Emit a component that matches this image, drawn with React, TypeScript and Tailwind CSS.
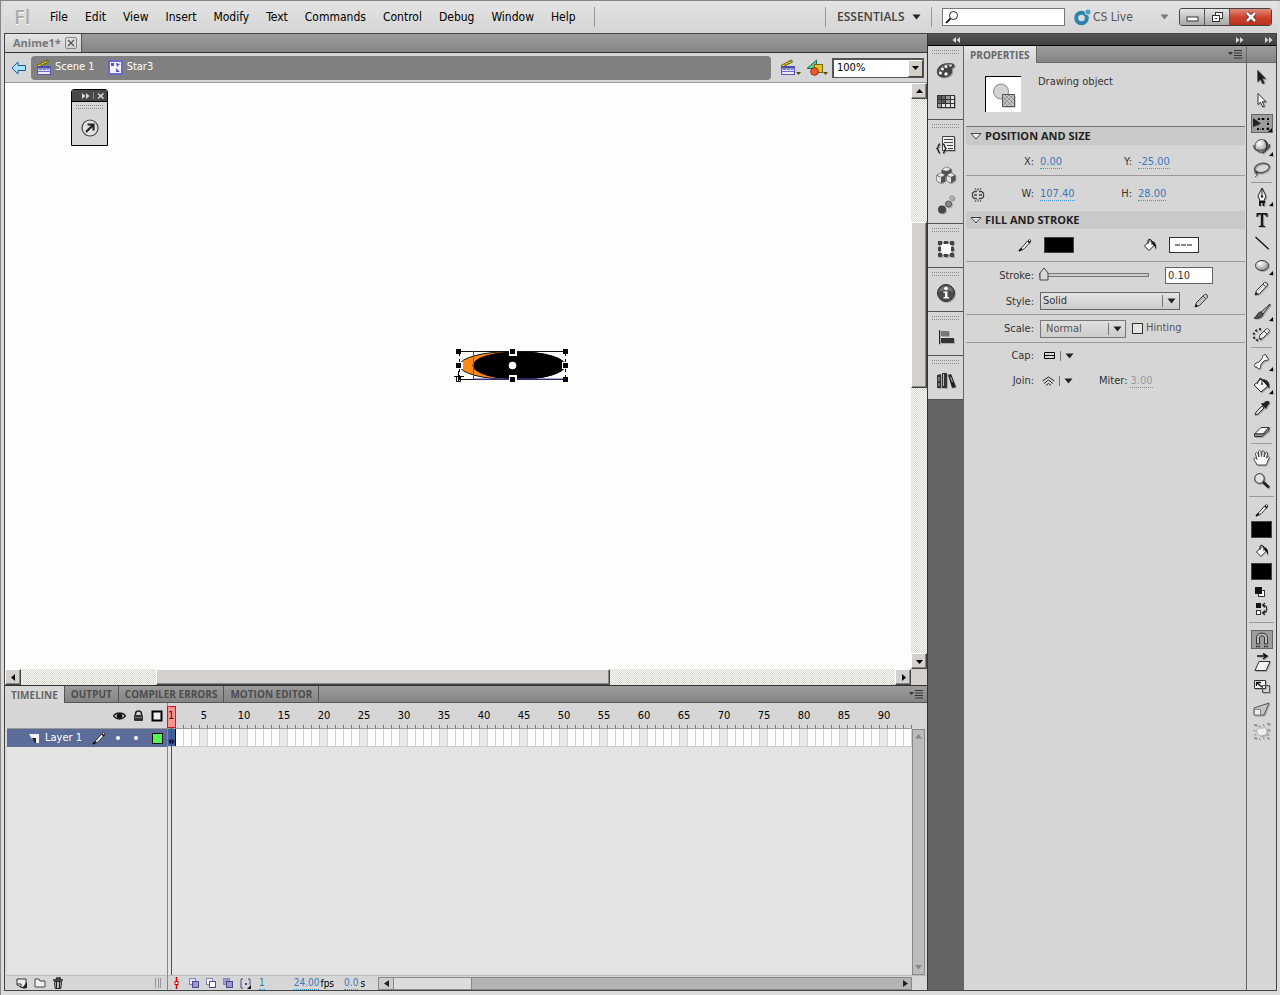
import { useState } from "react";
import type { ReactNode } from "react";

interface Tool {
  label: string;
  icon: ReactNode;
  more?: boolean;
}

const Icon = ({ children, w = 20, h = 20 }: { children: ReactNode; w?: number; h?: number }) => (
  <svg width={w} height={h} viewBox={`0 0 ${w} ${h}`} fill="none" className="shrink-0" aria-hidden="true">
    {children}
  </svg>
);

const Down = ({ color = "#222" }: { color?: string }) => (
  <Icon w={9} h={6}>
    <path d="M0.5 0.5h8L4.5 5.5z" fill={color} />
  </Icon>
);

const Chevrons = ({ left = false }: { left?: boolean }) => (
  <Icon w={8} h={6}>
    <path d={left ? "M4 0v6L0.5 3zM8 0v6L4.5 3z" : "M0 0v6L3.5 3zM4 0v6L7.5 3z"} fill="#d8d8d8" />
  </Icon>
);

const PanelMenu = () => (
  <button aria-label="Panel menu" className="flex items-center">
    <Icon w={14} h={9}>
      <path d="M0 2h5L2.500 5z" fill="#333" />
      <path d="M6 0.500h8M6 3h8M6 5.500h8M6 8h8" stroke="#333" />
    </Icon>
  </button>
);

const Clapper = () => (
  <Icon w={16} h={17}>
    <path d="M1 6.500L11.500 1l1 2L2.500 8z" fill="#f0e020" stroke="#6b6410" />
    <path d="M4.500 4.500l1 2M7.500 3l1 2M10 1.500l1 2" stroke="#6b6410" />
    <rect x="1.500" y="7.500" width="13" height="8" fill="#d8d8f8" stroke="#5a58b8" />
    <path d="M2 8.500h12" stroke="#4b49a0" strokeWidth="2" />
    <path d="M3 10.500h10" stroke="#7a78c8" strokeDasharray="3 1" />
    <path d="M2 12.500h12" stroke="#6f6cc8" />
    <path d="M3 14h10" stroke="#fff" />
  </Icon>
);

const Pencil = ({ fill = "#f4f4f4" }: { fill?: string }) => (
  <>
    <path d="M3 16l1.500-4.500L12.500 3.500c1.500-1 3.800 1 2.800 2.800L7.500 14.500z" fill={fill} stroke="#333" />
    <path d="M11 5l3 3" stroke="#555" />
    <path d="M6 12l6-6" stroke="#aaa" />
    <path d="M3 16l1-3 2 2z" fill="#111" />
  </>
);

const SmallPencil = () => (
  <Icon w={14} h={14}>
    <path d="M1 13l1.500-2.500L4.500 9l5-6 2-1.500 1.500 1.300-1.500 2.200-5 5.500-2.500 1.500z" fill="#f4f4f4" stroke="#333" />
    <path d="M1 13l3-2.500M10 3l2 2" stroke="#000" strokeWidth="1.500" />
  </Icon>
);

const SmallBucket = () => (
  <Icon w={14} h={14}>
    <path d="M1.500 8L7 2.500l4.500 4.500L6 12.500z" fill="#fff" stroke="#222" />
    <path d="M5 6V2l2-1 2 2v4" stroke="#222" />
    <path d="M8.500 3c3.500.5 5.500 3.500 4.500 9-.8-3-1.500-4-2.500-5z" fill="#111" />
  </Icon>
);

const tools1: Tool[] = [
  { label: "Selection", icon: <path d="M5.500 2v12l3-2.500 2 4.500 2-1-2-4.200h3.500z" fill="#1c1c1c" stroke="#555" strokeWidth=".5" /> },
  { label: "Subselection", icon: <path d="M6 2.500v11l2.500-2.300 2.300 4.800 1.600-.8-2-4.500H14z" fill="#fff" stroke="#333" /> },
  { label: "Free Transform", more: true, icon: <><path d="M1 4v9l8-3.500z" fill="#222" /><path d="M6 4h2v2H6zM10 4h2v2h-2zM15 4h2v2h-2zM15 9h2v2h-2zM15 14h2v2h-2zM10 14h2v2h-2zM5 14h2v2H5z" fill="#000" /><path d="M6 5h10v10H6z" stroke="#333" strokeDasharray="1 2" /></> },
  { label: "3D Rotation", more: true, icon: <><circle cx="9.500" cy="9" r="6.500" fill="url(#ball)" stroke="#555" /><path d="M2 8c-1 5 4 6 8 5.500S18 11 17.500 7" stroke="#444" strokeWidth="1.300" /><path d="M12.500 3c4 4 3 10-2 13" stroke="#333" strokeWidth="1.500" /><path d="M6 11c2 1.500 5 1.500 7 0v3c-2 2-5 2-7 0z" fill="#777" opacity=".5" /></> },
  { label: "Lasso", icon: <><ellipse cx="10" cy="8" rx="7.500" ry="4.500" stroke="#555" transform="rotate(-12 10 8)" strokeWidth="1.500" /><path d="M4 11c-2 0-2 2.500 0 2.500s2-2 0-2.500c2 3 1 5-1 6" stroke="#333" /></> },
];

const tools2: Tool[] = [
  { label: "Pen", more: true, icon: <><path d="M10 1L6 9l2 5h4l2-5z" fill="#f0f0f0" stroke="#222" /><path d="M10 2v7" stroke="#222" /><circle cx="10" cy="9.500" r="1.200" fill="#222" /><path d="M7 15h6M8 15v4M11.500 15v4" stroke="#111" strokeWidth="1.800" /></> },
  { label: "Text", icon: <path d="M4.500 3h11v4h-1q-.3-2.500-2.500-2.500h-.8V15q0 1 2 1v1H6.800v-1q2 0 2-1V4.500H8Q5.800 4.500 5.500 7h-1z" fill="#1a1a1a" /> },
  { label: "Line", icon: <path d="M3.500 4l13 12" stroke="#111" strokeWidth="1.200" /> },
  { label: "Oval", more: true, icon: <ellipse cx="10" cy="9.500" rx="6.500" ry="5" fill="url(#ball)" stroke="#333" /> },
  { label: "Pencil", icon: <Pencil /> },
  { label: "Brush", more: true, icon: <><path d="M18 2l-9 8 2 2 7-9z" fill="#bbb" stroke="#333" /><path d="M9 10c-4 0-3 4-7 6 5 1 9-1 9-4z" fill="#555" stroke="#222" /></> },
  { label: "Deco", icon: <><path d="M9 4c-9 1-8 8-6 10s5 1 6 0" stroke="#222" strokeWidth="2" strokeDasharray="2 2" /><path d="M7 14l1-4 6-6c2-1 4 1 3 3l-6 6z" fill="#eee" stroke="#444" /><path d="M12 6l3 3" stroke="#555" /></> },
];

const tools3: Tool[] = [
  { label: "Bone", more: true, icon: <path d="M3 12c-1.500 2 0 3.500 2 3 0 2 3 2.500 3.500.5.200-1-.5-2 .5-3l3-3.500c1-1 2 0 3-.5 2-1 1.500-3-.5-3.500.5-2-1-3-3-2-1.500 1-.5 2.500-1.500 3.500l-3 3.500c-1 1-2.500 0-4 2z" fill="#f8f8f8" stroke="#333" /> },
  { label: "Paint Bucket", more: true, icon: <><path d="M2 10l7-6 7 7-7 6z" fill="#f0f0f0" stroke="#222" /><path d="M5 9L8 3l2 1v5" stroke="#333" /><path d="M10 4c5 0 9 4 7 10-1-2-1-3-2-3z" fill="#222" /><circle cx="10" cy="9" r="1" fill="#444" /></> },
  { label: "Eyedropper", icon: <><path d="M3 17l1-3 6-6 2 2-6 6z" fill="#ddd" stroke="#333" /><path d="M9 6l5 5 1-2 1-2c2-1 2-4 0-4s-3 0-4 2l-2 0z" fill="#222" /></> },
  { label: "Eraser", icon: <><path d="M2.500 13L9 6.500h8L11 13z" fill="#f4f4f4" stroke="#333" /><path d="M2.500 13v2.500H10l7-6V6.500L11 13z" fill="#999" stroke="#333" /></> },
];

const tools4: Tool[] = [
  { label: "Hand", icon: <path d="M5 17C4 14 1.500 12 2 10.500s2.500 0 3 1L3.500 6c0-2 2-2 2.500 0l1 3-.500-5c0-2 2.200-2 2.500 0l.5 4.500L10 4c.3-2 2.300-1.500 2.300.5L12 9l1.500-4c.8-1.500 2.500-.8 2 1L14.500 10c2-2 3.500-1.500 2.500.500C15 14 15 15 14 17z" fill="#fff" stroke="#444" /> },
  { label: "Zoom", icon: <><circle cx="7.500" cy="7.500" r="4.800" fill="#e4e4e4" stroke="#555" strokeWidth="1.300" /><path d="M11 11l6 5.500" stroke="#222" strokeWidth="3" /></> },
];

const tools5: Tool[] = [
  { label: "Snap to Objects", icon: <><path d="M4.500 14V8c0-6.500 11-6.500 11 0v6h-3V8c0-3-5-3-5 0v6z" fill="#bbb" stroke="#333" /><path d="M4 16.500h4M12 16.500h4" stroke="#222" strokeWidth="1.500" strokeDasharray="1.500 1" /></> },
  { label: "Rotate and Skew", icon: <><path d="M5 3h9M11 0.500L15 3l-4 3" stroke="#111" strokeWidth="1.500" /><path d="M3 17.500l4-9h11l-4 9z" fill="#f4f4f4" stroke="#333" /></> },
  { label: "Scale", icon: <><path d="M2.500 4.500h11v8h-11z" fill="#f4f4f4" stroke="#333" /><path d="M10.500 9.500h7v7h-7z" stroke="#555" /><path d="M5 7l5 4M4.500 10V6.500H9" stroke="#111" strokeWidth="1.300" /></> },
  { label: "Distort", icon: <><path d="M2 9l15-5-5 12H2z" fill="#c4c4c4" stroke="#555" /><path d="M2.500 10.500h6v5.500h-6z" fill="#eee" stroke="#888" /></> },
  { label: "Envelope", icon: <><path d="M2 3h3M7 4h1M11 3h1M15 2h3M2 8v1M3 12v1M2 16h3M7 17h1M11 16h1M15 16h2M17 7v2M16 12v1" stroke="#888" strokeWidth="1.500" /><path d="M5 8c1-4 4-1 6-2s4 0 4 3 0 4-2 4-4 2-6 0-3-3-2-5z" fill="#eee" stroke="#aaa" /></> },
];

const dockGroups: Tool[][] = [
  [
    { label: "Color", icon: <><path d="M1 12C0 6 6 2 13 2c6 0 7 3 4 5-2 1 0 3-1 5-3 6-14 6-15 0z" fill="#444" /><path d="M3 12c0-5 4-8 11-9" stroke="#888" /><circle cx="4.500" cy="12" r="1.500" fill="#fff" /><circle cx="6.500" cy="8" r="1.500" fill="#fff" /><circle cx="10" cy="5.500" r="1.500" fill="#fff" /><circle cx="14.500" cy="4.500" r="1.300" fill="#ddd" /><circle cx="10" cy="13" r="1.700" fill="#fff" /></> },
    { label: "Swatches", icon: <><path d="M1 4h18v13H1z" fill="#333" /><path d="M2 5h3v3H2zM6 9h3v3H6z" fill="#555" /><path d="M6 5h3v3H6zM2 9h3v3H2z" fill="#666" /><path d="M10 5h4v3h-4zM10 9h4v3h-4zM2 13h3v3H2z" fill="#999" /><path d="M15 5h3v3h-3zM15 9h3v3h-3zM6 13h3v3H6zM10 13h4v3h-4zM15 13h3v3h-3z" fill="#e4e4e4" /></> },
  ],
  [
    { label: "Code Snippets", icon: <><path d="M6.500 1.500h12v14h-12z" fill="#eee" stroke="#444" /><path d="M8 4.500h9M8 7.500h9M11 10.500h6M12 13.500h5" stroke="#444" /><path d="M4 9c-2 0-1 3-3 4.500C3 15 2 18 4 18M7 9c2 0 1 3 3 4.500C8 15 9 18 7 18" stroke="#222" strokeWidth="1.500" /></> },
    { label: "Components", icon: <><path d="M6 5l4-3 5 2v5l-5 2-4-2zM1 10l4-2 4 2v6l-4 2-4-2zM11 10l4-2 4 2v5l-4 3-4-2z" fill="#555" stroke="#444" /><path d="M6 5l4-3 5 2-4 2zM1 10l4-2 4 2-4 2zM11 10l4-2 4 2-4 2zM1 11l4 1.500V18l-4-2zM11 11l4 1.500V18l-4-2z" fill="#e4e4e4" /></> },
    { label: "Motion Presets", icon: <><circle cx="6" cy="14.500" r="4" fill="#444" /><circle cx="12.500" cy="9" r="3" fill="#888" stroke="#555" /><circle cx="16" cy="3" r="2.200" fill="#bbb" stroke="#888" /></> },
  ],
  [{ label: "Transform", icon: <><path d="M4 4h12v12H4z" fill="#fcfcfc" stroke="#666" /><path d="M2 2h4v4H2zM8 2h4v3H8zM14 2h4v4h-4zM2 8h3v4H2zM15 8h3v4h-3zM2 14h4v4H2zM8 15h4v3H8zM14 14h4v4h-4z" fill="#444" /></> }],
  [{ label: "Info", icon: <><circle cx="10" cy="10" r="8.500" fill="#4b4b4b" stroke="#333" /><path d="M3 9c1-8 13-8 14 0-4-2-10-2-14 0z" fill="#999" opacity=".5" /><circle cx="10" cy="5.500" r="1.800" fill="#fff" /><path d="M7.500 8.500h4V14h1.500v1.500H7.500V14H9v-4H7.500z" fill="#fff" /></> }],
  [{ label: "Align", icon: <><path d="M3.500 3v14" stroke="#222" /><path d="M5 4h8v5H5z" fill="#777" /><path d="M5 11h13v5H5z" fill="#333" /></> }],
  [{ label: "Library", icon: <><path d="M1 4l4-1v14H1zM6 2h5v15H6z" fill="#333" /><path d="M12 4l3-1 5 13-4 1z" fill="#222" /><path d="M3 6v4M3 12v3M7.500 3v12M14.500 6l2 5" stroke="#bbb" /></> }],
];

const ToolButton = ({ tool, selected = false }: { tool: Tool; selected?: boolean }) => (
  <button aria-label={tool.label} className="flex h-[23px] w-full items-center justify-center">
    <span
      className={`relative flex h-[19px] w-[22px] items-center justify-center ${
        selected ? "bg-[#9d9d9d] border border-[#666]" : "drop-shadow-[1px_1px_0_rgba(0,0,0,0.2)]"
      }`}
    >
      <Icon>{tool.icon}</Icon>
      {tool.more && (
        <svg width="4" height="4" viewBox="0 0 4 4" className="absolute right-0 bottom-0">
          <path d="M4 0v4H0z" fill="#000" />
        </svg>
      )}
    </span>
  </button>
);

const dots = "bg-[linear-gradient(90deg,#888_1px,transparent_1px)] bg-[length:2px_1px]";

const Grip = () => (
  <div className="mx-auto flex h-[4px] w-[28px] flex-col justify-between">
    <span className={`h-px ${dots}`} />
    <span className={`h-px ${dots}`} />
  </div>
);

const ScrollArrow = ({ dir }: { dir: "up" | "down" | "left" | "right" }) => {
  const shapes = { up: "M1 6h7L4.500 2z", down: "M1 3h7L4.500 7z", left: "M6 1v7L2 4.500z", right: "M3 1v7l4-3.500z" };
  return (
    <button
      aria-label={`Scroll ${dir}`}
      className="flex size-4 shrink-0 items-center justify-center border border-t-white border-l-white border-r-[#444] border-b-[#444] bg-[#d4d0cd] shadow-[inset_-1px_-1px_#888]"
    >
      <Icon w={9} h={9}><path d={shapes[dir]} fill="#000" /></Icon>
    </button>
  );
};

const track = "bg-[conic-gradient(#d6d6cf_25%,#fcfcf8_0_50%,#d6d6cf_0_75%,#fcfcf8_0)] bg-[length:2px_2px]";
const thumb = "border border-t-white border-l-white border-r-[#444] border-b-[#444] bg-[#d4d0cd] shadow-[inset_-1px_-1px_#888]";
const tabBar = "bg-linear-to-b from-[#9c9c9c] to-[#858585]";
const hot = "leading-[12px] text-[#3a78b8] border-b border-dotted border-[#3a9ad8]";

const menus = ["File", "Edit", "View", "Insert", "Modify", "Text", "Commands", "Control", "Debug", "Window", "Help"];

const MenuBar = () => (
  <header className="flex h-[32px] shrink-0 items-center bg-linear-to-b from-[#e4e4e4] to-[#d4d4d4] pr-[5px] pl-[10px] text-[12px] text-black">
    <span className="w-[30px] text-[20px] leading-none font-semibold text-[#aaa] font-['Open_Sans'] [text-shadow:0_1px_#fff]">Fl</span>
    <nav className="flex gap-[17px] pl-[6px]">
      {menus.map((m) => (
        <button key={m}>{m}</button>
      ))}
    </nav>
    <div className="ml-[18px] h-5 w-px bg-[#999]" />
    <div className="ml-auto h-5 w-px bg-[#999]" />
    <button className="flex w-[105px] items-center gap-2 pl-[11px] font-['Open_Sans'] text-[12px] font-semibold text-[#444]">
      ESSENTIALS <Down />
    </button>
    <div className="mr-[10px] h-5 w-px bg-[#999]" />
    <label className="flex h-[18px] w-[123px] items-center border border-[#777] bg-white px-[2px]">
      <Icon w={14} h={14}>
        <circle cx="8.500" cy="5.500" r="4" stroke="#222" />
        <path d="M5.500 8.500L1 13" stroke="#222" strokeWidth="1.800" />
      </Icon>
      <input aria-label="Search" className="w-full min-w-0 bg-transparent outline-none" />
    </label>
    <button className="ml-[9px] flex w-[95px] items-center gap-[2px] text-[#555]">
      <Icon w={17} h={18}>
        <circle cx="7.500" cy="10" r="5.300" stroke="#2b84ad" strokeWidth="4" />
        <circle cx="14" cy="4" r="3" fill="#4aa0c4" stroke="#d8d8d8" />
      </Icon>
      <span className="mr-auto">CS Live</span>
      <Down color="#777" />
    </button>
    <div className="ml-[10px] flex h-[18px] w-[93px] overflow-hidden rounded-[3px] border border-[#444]">
      <button aria-label="Minimize" className="flex w-[25px] items-center justify-center border-r border-[#555] bg-linear-to-b from-[#e4e4e4] to-[#a8a8a8]">
        <Icon w={13} h={12}><rect x="1" y="6" width="11" height="4" fill="#fff" stroke="#333" /></Icon>
      </button>
      <button aria-label="Restore" className="flex w-[25px] items-center justify-center border-r border-[#555] bg-linear-to-b from-[#e4e4e4] to-[#a8a8a8]">
        <Icon w={13} h={12}>
          <rect x="4.500" y="1.500" width="7" height="6" fill="#fff" stroke="#333" />
          <rect x="1.500" y="4.500" width="7" height="6" fill="#fff" stroke="#333" />
          <rect x="4" y="7" width="2" height="1" fill="#333" />
        </Icon>
      </button>
      <button aria-label="Close" className="flex flex-1 items-center justify-center bg-linear-to-b from-[#e08a7c] via-[#cc4430] to-[#b8321e]">
        <Icon w={14} h={12}>
          <path d="M3 2l8 8M11 2l-8 8" stroke="#622" strokeWidth="4.500" />
          <path d="M3 2l8 8M11 2l-8 8" stroke="#fff" strokeWidth="2.500" />
        </Icon>
      </button>
    </div>
  </header>
);

const SceneBar = () => (
  <div className="flex h-[30px] shrink-0 items-center border-b border-[#999] bg-[#d6d6d6] pl-[6px]">
    <button aria-label="Back">
      <Icon w={16} h={14}>
        <path d="M1 7l6-6v3.500h7.500v5H7V13z" fill="#a9e2fb" stroke="#225a8a" />
      </Icon>
    </button>
    <div className="ml-[4px] flex h-[24px] flex-1 items-center rounded-[4px] bg-[#808080] pl-[5px] text-[11px] text-white">
      <button className="flex items-center gap-[3px]">
        <Clapper /> Scene 1
      </button>
      <button className="ml-[13px] flex items-center gap-[4px]">
        <Icon w={15} h={15}>
          <rect x="1" y="1" width="13" height="13" fill="#f4f4ff" stroke="#6a68c8" strokeWidth="2" />
          <path d="M3 3h3v3H3zM8 3l4 1-3 3zM8 8l4 4H8zM4 9l2-1" fill="#5a58b8" />
        </Icon>
        Star3
      </button>
    </div>
    <button aria-label="Edit scene" className="ml-[9px] flex items-end">
      <Clapper />
      <Icon w={5} h={4}><path d="M0 0h5L2.500 3z" fill="#554d00" /></Icon>
    </button>
    <button aria-label="Edit symbols" className="ml-[5px] flex items-end">
      <Icon w={17} h={17}>
        <path d="M1 9.500L10.500 1v8.500z" fill="#4dcc9c" stroke="#1c7450" />
        <rect x="8.500" y="5.500" width="8" height="8" fill="#e6c61c" stroke="#77660a" />
        <circle cx="8.500" cy="12.500" r="3.800" fill="#f05a30" stroke="#902808" />
      </Icon>
      <Icon w={5} h={4}><path d="M0 0h5L2.500 3z" fill="#554d00" /></Icon>
    </button>
    <div className="relative mr-[3px] ml-[4px] h-[20px] w-[92px] border border-t-2 border-l-2 border-[#555] bg-white">
      <select aria-label="Zoom" className="block h-full w-full appearance-none pl-[3px] text-[11px] text-black outline-none">
        <option>100%</option>
      </select>
      <span className="pointer-events-none absolute top-0 right-0 bottom-0 flex w-[15px] items-center justify-center border border-t-white border-l-white border-r-[#444] border-b-[#444] bg-[#d4d0c8]">
        <Icon w={9} h={6}><path d="M1 1h7L4.500 5z" fill="#000" /></Icon>
      </span>
    </div>
  </div>
);

const Stage = () => (
  <div className="flex min-h-0 flex-1 flex-col">
    <div className="flex min-h-0 flex-1">
      <main className="relative min-w-0 flex-1 overflow-hidden bg-[#fdfffd]">
        {/* Floating collapsed panel */}
        <div className="absolute top-[6px] left-[66px] w-[37px] overflow-hidden rounded-t-[3px] border border-black bg-[#d6d6d6]">
          <div className="flex h-[12px] items-center justify-end gap-[3px] border-b border-black bg-[#484848] pr-[2px]">
            <Chevrons />
            <span className="h-[7px] w-px bg-[#888]" />
            <Icon w={8} h={8}><path d="M1 1.500l5.500 5M6.500 1.500L1 6.500" stroke="#ddd" strokeWidth="1.500" /></Icon>
          </div>
          <div className="flex h-[43px] flex-col pt-[3px]">
            <Grip />
            <button aria-label="Open panel" className="flex flex-1 items-center justify-center pt-[1px]">
              <Icon>
                <circle cx="10" cy="10" r="8" fill="#e2e2e2" stroke="#444" strokeWidth="1.200" />
                <path d="M6 14l7-7M7.500 6.500H13.500V12.500" stroke="#222" strokeWidth="2.200" />
              </Icon>
            </button>
          </div>
        </div>
        {/* Selected drawing object */}
        <svg width="120" height="40" viewBox="0 0 120 40" fill="none" className="absolute top-[262px] left-[447px]">
          <ellipse cx="60.500" cy="20.500" rx="53" ry="14" fill="#ff8a18" stroke="#111" />
          <ellipse cx="67" cy="20.500" rx="46.500" ry="14" fill="#000" />
          <path d="M7 6.500h107M7 34.500h107" stroke="#111" />
          <path d="M21.500 6v28h90" stroke="#5048c0" />
          <path d="M7.500 6v28M113.500 6v28" stroke="#000" strokeDasharray="5 3" />
          <path d="M57 3h8v8h-8zM57 30h8v8h-8zM3 17h8v7H3zM110 17h8v7h-8z" fill="#fff" />
          <path d="M4 4h5v5H4zM58 4h5v5h-5zM111 4h5v5h-5zM4 18h5v5H4zM111 18h5v5h-5zM58 32h5v5h-5zM111 32h5v5h-5z" fill="#000" />
          <path d="M4.500 32v4.500h4V32" stroke="#000" />
          <circle cx="60.500" cy="20.500" r="3.800" fill="#fff" />
          <path d="M2 31.500h10M6.500 26v10" stroke="#000" />
        </svg>
      </main>
      <div className={`flex w-4 shrink-0 flex-col ${track}`}>
        <ScrollArrow dir="up" />
        <div className="flex min-h-0 flex-1 flex-col pt-[123px]">
          <div className={`h-[166px] ${thumb}`} />
        </div>
        <ScrollArrow dir="down" />
      </div>
    </div>
    <div className="flex h-4 shrink-0">
      <div className={`flex flex-1 ${track}`}>
        <ScrollArrow dir="left" />
        <div className="flex min-w-0 flex-1 pl-[135px]">
          <div className={`w-[454px] ${thumb}`} />
        </div>
        <ScrollArrow dir="right" />
      </div>
      <div className="w-4 bg-[#d4d0cd]" />
    </div>
  </div>
);

const frames = Array.from({ length: 160 }, (_, i) => i + 1);

const Onion = ({ a, b }: { a: string; b: string }) => (
  <Icon w={11} h={11}>
    <rect x="0.500" y="0.500" width="6" height="6" fill={a} stroke="#8884c4" />
    <rect x="3.500" y="3.500" width="6" height="6" fill={b} stroke="#4b4890" />
  </Icon>
);

const Timeline = () => (
  <section className="flex h-[305px] shrink-0 flex-col border-t border-[#333] bg-[#d6d6d6]">
    <div className={`flex h-[17px] shrink-0 items-stretch border-b border-[#555] font-['Open_Sans'] text-[10px] font-bold text-[#4c4c4c] ${tabBar}`}>
      {["TIMELINE", "OUTPUT", "COMPILER ERRORS", "MOTION EDITOR"].map((tab, i) => (
        <button key={tab} className={`border-r border-[#555] px-[6px] leading-[16px] ${i === 0 ? "-mb-px bg-[#d8d8d8] text-[#666]" : ""}`}>
          {tab}
        </button>
      ))}
      <div className="ml-auto flex items-center pr-[4px]"><PanelMenu /></div>
    </div>
    <div className="flex min-h-0 flex-1 pl-[2px]">
      {/* Layers */}
      <div className="flex w-[161px] shrink-0 flex-col border-r border-[#888]">
        <div className="flex h-[26px] shrink-0 items-center justify-end gap-[7px] border-b border-[#999] pr-[4px]">
          <Icon w={13} h={10}>
            <path d="M0.500 5C3 1 10 1 12.500 5 9 9 4 9 0.500 5z" fill="#ccc" stroke="#222" strokeWidth="1.300" />
            <circle cx="6.500" cy="5" r="2.800" fill="#111" />
          </Icon>
          <Icon w={11} h={12}>
            <path d="M2.500 6V4c0-4 6-4 6 0v2" stroke="#222" strokeWidth="1.500" />
            <rect x="1" y="5" width="9" height="6" rx="1" fill="#333" />
            <path d="M2 7.500h7" stroke="#777" />
          </Icon>
          <Icon w={12} h={12}><rect x="1.500" y="1.500" width="9" height="9" fill="#eee" stroke="#000" strokeWidth="2" /></Icon>
        </div>
        <div className="flex h-[18px] shrink-0 items-center bg-[#5c6c98] pr-[4px] pl-[22px] text-[11px] text-white">
          <Icon w={11} h={10}>
            <path d="M0 1h10v9H7V6H3z" fill="#f4f4f4" />
            <path d="M3 5h4v5H6z" fill="#222" />
          </Icon>
          <span className="ml-[5px]">Layer 1</span>
          <span className="ml-[10px]"><SmallPencil /></span>
          <span className="ml-auto size-[4px] rounded-full bg-white" />
          <span className="mx-[14px] size-[4px] rounded-full bg-white" />
          <span className="size-[11px] border border-black bg-[#4cff4c]" />
        </div>
        <div className="flex-1 bg-[#e4e4e4]" />
        <div className="flex h-[15px] shrink-0 items-center gap-[7px] border-t border-[#bbb] pl-[9px]">
          <Icon w={11} h={11}><path d="M1 1h9v9H7L1 7z" fill="#eee" stroke="#333" /><path d="M1 6h4v4" stroke="#333" /><path d="M6 10h5V4z" fill="#222" /></Icon>
          <Icon w={12} h={10}><path d="M1 1h4l1 2h5v6H1z" fill="#eee" stroke="#444" /></Icon>
          <Icon w={10} h={12}><path d="M0 3h10M3 3l1-2h3v2" stroke="#222" strokeWidth="1.500" /><path d="M1.500 4.500h7l-.7 7H2.200z" fill="#bbb" stroke="#222" /><path d="M3.500 5v6M6.500 5v6" stroke="#222" /></Icon>
          <div className="ml-auto mr-[6px] h-[10px] w-[6px] border-x border-[#999] bg-[linear-gradient(90deg,transparent_2px,#999_2px,#999_3px,transparent_3px)]" />
        </div>
      </div>
      {/* Frames */}
      <div className="relative flex min-w-0 flex-1 flex-col">
        <div className="mr-[15px] flex h-[26px] shrink-0 overflow-hidden border-b border-[#999] text-[11px] text-black">
          {frames.map((f) => (
            <div key={f} className="flex w-[8px] shrink-0 flex-col items-center justify-between pt-[5px]">
              <span className="h-[16px] whitespace-nowrap leading-[15px]">{f % 5 === 0 && f <= 90 ? f : ""}</span>
              <span className="h-[3px] w-px self-end bg-[#777]" />
            </div>
          ))}
        </div>
        <div className="flex min-h-0 flex-1">
          <div className="flex min-w-0 flex-1 flex-col">
            <div className="flex h-[18px] shrink-0 overflow-hidden border-b border-[#ccc] bg-white">
              {frames.map((f) => (
                <div
                  key={f}
                  className={`flex w-[8px] shrink-0 items-end justify-center border-r ${
                    f === 1 ? "border-black bg-[#4562a0] pb-[2px]" : f % 5 === 0 ? "border-[#d0d0d0] bg-[#e9e7ea]" : "border-[#d0d0d0]"
                  }`}
                >
                  {f === 1 && <span className="size-[5px] rounded-full bg-[#0a1040]" />}
                </div>
              ))}
            </div>
            <div className="flex-1 bg-[#e4e4e4]" />
          </div>
          <div className="mr-[2px] flex w-[13px] flex-col items-center justify-between border border-[#888] bg-[#bcbcbc] py-[4px]">
            <Icon w={7} h={5}><path d="M0 4.500h7L3.500 0z" fill="#888" /></Icon>
            <Icon w={7} h={5}><path d="M0 0h7L3.500 4.500z" fill="#888" /></Icon>
          </div>
        </div>
        <div className="flex h-[15px] shrink-0 items-center border-t border-[#bbb] text-[10px] text-black">
          <span className="ml-[5px]"><Icon w={6} h={12}><path d="M3.500 0v12" stroke="#e00000" strokeWidth="1.500" /><rect x="2" y="4.500" width="3" height="3" fill="#fff" stroke="#e00000" /></Icon></span>
          <button aria-label="Onion skin" className="ml-[10px]"><Onion a="#e4e4f4" b="#9a98cc" /></button>
          <button aria-label="Onion skin outlines" className="ml-[6px]"><Onion a="#fff" b="#fff" /></button>
          <button aria-label="Edit multiple frames" className="ml-[6px]"><Onion a="#9a98cc" b="#9a98cc" /></button>
          <button aria-label="Modify markers" className="ml-[6px]">
            <Icon w={11} h={11}><path d="M3 1H1v9h2M8 1h2v6" stroke="#4b4890" /><rect x="5" y="5" width="2" height="2" fill="#4b4890" /><path d="M7 11h4V7z" fill="#111" /></Icon>
          </button>
          <span className={`ml-[8px] ${hot}`}>1</span>
          <span className={`ml-[29px] ${hot}`}>24.00</span>
          <span className="ml-[1px]">fps</span>
          <span className={`ml-[10px] ${hot}`}>0.0</span>
          <span className="ml-[2px]">s</span>
          <div className="ml-[13px] mr-[15px] flex h-[13px] flex-1 border border-[#888] bg-[#b4b4b4]">
            <button aria-label="Scroll frames left" className="flex w-[15px] items-center justify-center border-r border-[#888] bg-[#ccc]">
              <Icon w={5} h={7}><path d="M5 0v7L0 3.500z" fill="#222" /></Icon>
            </button>
            <div className="w-[78px] border-r border-[#888] bg-[#dcdcdc]" />
            <button aria-label="Scroll frames right" className="ml-auto flex w-[12px] items-center justify-center">
              <Icon w={5} h={7}><path d="M0 0v7l5-3.500z" fill="#222" /></Icon>
            </button>
          </div>
        </div>
        {/* Playhead */}
        <div className="absolute top-[3px] bottom-[15px] -left-px flex w-[9px] flex-col items-center">
          <span className="h-[22px] w-full border border-[#d01818] bg-[#ff9090] text-[11px] leading-[17px] text-[#222]">1</span>
          <span className="w-px flex-1 bg-[#d01818]" />
        </div>
      </div>
    </div>
  </section>
);

const SectionTitle = ({ children }: { children: ReactNode }) => (
  <h2 className="bg-[#c9c9c9] font-['Open_Sans'] text-[11px] font-bold text-[#222]">
    <button className="flex h-[18px] w-full items-center gap-[3px] pl-[4px]">
      <Icon w={12} h={8}><path d="M1 1.500h10L6 7z" fill="#eee" stroke="#444" /></Icon>
      {children}
    </button>
  </h2>
);

const row = "grid grid-cols-[68px_54px_32px_1fr] items-center gap-x-[6px]";

const Properties = () => {
  const [stroke, setStroke] = useState(0);
  return (
    <aside className="flex w-[284px] shrink-0 flex-col border-x border-[#666] bg-[#d6d6d6] text-[11px] text-[#333]">
      <div className={`flex h-[17px] shrink-0 items-stretch border-b border-[#666] ${tabBar}`}>
        <button className="-mb-px border-r border-[#666] bg-linear-to-b from-[#e4e4e4] to-[#d6d6d6] px-[6px] font-['Open_Sans'] text-[10px] leading-[16px] font-bold text-[#666]">PROPERTIES</button>
        <div className="ml-auto flex items-center pr-[4px]"><PanelMenu /></div>
      </div>
      <div className="flex flex-col pr-[1px] pl-[2px]">
        <div className="flex h-[64px] items-start gap-[17px] border-b border-[#777] pt-[13px] pl-[19px]">
          <div className="flex size-[36px] items-center justify-center border-t border-l border-black bg-white">
            <Icon w={26} h={28}>
              <circle cx="10" cy="10.500" r="7.500" fill="#d4d4d4" stroke="#888" />
              <rect x="12" y="15" width="13" height="12" fill="#999" opacity=".4" />
              <rect x="11.500" y="13.500" width="12" height="12" fill="#c4c4c4" stroke="#555" />
              <path d="M12 16l9 9M12 20l5 5M14 14l9 9M18 14l5 5M22 14L12 24M18 14l-6 6M23 18l-7 7" stroke="#777" strokeWidth=".6" />
            </Icon>
          </div>
          <span className="leading-[12px]">Drawing object</span>
        </div>
        <SectionTitle>POSITION AND SIZE</SectionTitle>
        <div className={`${row} h-[31px] border-b border-[#999] pt-[4px]`}>
          <span className="text-right">X:</span>
          <span><span className={hot}>0.00</span></span>
          <span className="text-right">Y:</span>
          <span><span className={hot}>-25.00</span></span>
        </div>
        <div className={`${row} h-[35px] pt-[2px]`}>
          <span className="flex items-center justify-between pl-[5px]">
            <Icon w={14} h={14}>
              <path d="M6 3.500H3.500L1.500 5v4l2 1.500H6M8 3.500h2.500l2 1.500v4l-2 1.500H8M3 7h3M8 7h3" stroke="#444" strokeWidth="1.300" />
              <path d="M7 0v3M7 11v3M4 0l1 2M10 0L9 2M4 14l1-2M10 14l-1-2" stroke="#555" />
            </Icon>
            W:
          </span>
          <span><span className={hot}>107.40</span></span>
          <span className="text-right">H:</span>
          <span><span className={hot}>28.00</span></span>
        </div>
        <SectionTitle>FILL AND STROKE</SectionTitle>
        <div className="flex h-[33px] items-center border-b border-[#999] pl-[52px]">
          <SmallPencil />
          <button aria-label="Stroke color" className="ml-[12px] h-[16px] w-[30px] border border-[#444] bg-black" />
          <span className="ml-[69px]"><SmallBucket /></span>
          <button aria-label="Fill color" className="ml-[12px] flex h-[16px] w-[30px] items-center justify-center border border-[#333] bg-white">
            <Icon w={18} h={2}><path d="M0 1h5M6 1h5M12 1h5" stroke="#888" strokeWidth="2" /></Icon>
          </button>
        </div>
        <div className="flex h-[26px] items-center">
          <label htmlFor="stroke" className="w-[68px] pt-[2px] text-right">Stroke:</label>
          <div className="relative ml-[5px] flex h-[16px] w-[110px] items-center">
            <input
              id="stroke"
              type="range"
              value={stroke}
              onChange={(e) => setStroke(Number(e.target.value))}
              className="h-[4px] w-full appearance-none border border-[#777] bg-[#ccc] [&::-webkit-slider-thumb]:opacity-0"
            />
            <svg width="10" height="14" viewBox="0 0 10 14" className="pointer-events-none absolute top-0" style={{ left: stroke }}>
              <path d="M5 1l4 5v7H1V6z" fill="#d8d8d8" stroke="#444" />
            </svg>
          </div>
          <input aria-label="Stroke size" defaultValue="0.10" className="ml-[16px] h-[17px] w-[48px] border border-[#666] bg-white px-[2px] outline-none" />
        </div>
        <div className="flex h-[27px] items-center border-b border-[#999]">
          <label htmlFor="style" className="w-[68px] pt-[2px] text-right">Style:</label>
          <div className="relative ml-[6px] h-[18px] w-[140px]">
            <select id="style" className="h-full w-full appearance-none border border-[#666] bg-linear-to-b from-[#e4e4e4] to-[#ccc] pl-[2px] outline-none">
              <option>Solid</option>
            </select>
            <span className="pointer-events-none absolute top-[3px] right-[4px] flex h-[12px] items-center border-l border-[#777] pl-[4px]"><Down /></span>
          </div>
          <button aria-label="Edit stroke style" className="ml-[12px]"><Icon><Pencil fill="#ccc" /></Icon></button>
        </div>
        <div className="flex h-[28px] items-center border-b border-[#999]">
          <label htmlFor="scale" className="w-[68px] pt-[2px] text-right">Scale:</label>
          <div className="relative ml-[6px] h-[18px] w-[86px]">
            <select id="scale" className="h-full w-full appearance-none border border-[#777] bg-linear-to-b from-[#e0e0e0] to-[#ccc] pl-[5px] text-[#555] outline-none">
              <option>Normal</option>
            </select>
            <span className="pointer-events-none absolute top-[3px] right-[4px] flex h-[12px] items-center border-l border-[#777] pl-[4px]"><Down /></span>
          </div>
          <label className="ml-[6px] flex items-center gap-[3px] text-[#555]">
            <input type="checkbox" className="size-[11px] appearance-none border border-[#333] bg-[#e4e4e4]" />
            Hinting
          </label>
        </div>
        <div className="flex h-[26px] items-center">
          <span className="w-[68px] text-right">Cap:</span>
          <button aria-label="Cap" className="ml-[10px] flex items-center gap-[4px]">
            <Icon w={12} h={8}><path d="M0.500 0.500h10v6H0.500zM0 3.500h11" stroke="#000" /></Icon>
            <span className="h-[10px] w-px bg-[#777]" />
            <Down />
          </button>
        </div>
        <div className="flex h-[24px] items-center">
          <span className="w-[68px] text-right">Join:</span>
          <button aria-label="Join" className="ml-[8px] flex items-center gap-[4px]">
            <Icon w={13} h={10}><path d="M0.500 5L6.500 1l6 4M2 7.500L6.500 4 11 7.500M4 9.500L6.500 7.500 9 9.500" stroke="#222" /></Icon>
            <span className="h-[10px] w-px bg-[#777]" />
            <Down />
          </button>
          <span className="ml-[26px] mr-[3px]">Miter:</span>
          <span className="border-b border-dotted border-[#888] leading-[12px] text-[#999]">3.00</span>
        </div>
      </div>
    </aside>
  );
};

const Toolbox = () => (
  <div className="flex w-[29px] shrink-0 flex-col bg-[#d6d6d6]">
    <div className={`mb-[3px] h-[17px] shrink-0 border-b border-[#666] ${tabBar}`} />
    {tools1.map((t) => <ToolButton key={t.label} tool={t} selected={t.label === "Free Transform"} />)}
    <hr className="mx-[4px] mt-px mb-[2px] border-[#999]" />
    {tools2.map((t) => <ToolButton key={t.label} tool={t} />)}
    <hr className="mx-[4px] mt-px mb-[2px] border-[#999]" />
    {tools3.map((t) => <ToolButton key={t.label} tool={t} />)}
    <hr className="mx-[4px] mt-px mb-[2px] border-[#999]" />
    {tools4.map((t) => <ToolButton key={t.label} tool={t} />)}
    <hr className="mx-[2px] mt-[4px] mb-[2px] border-[#999]" />
    <div className="flex flex-col items-center">
      <span className="flex h-[22px] items-center"><SmallPencil /></span>
      <button aria-label="Stroke color" className="h-[17px] w-[21px] border border-[#444] bg-black" />
      <span className="flex h-[25px] items-center"><SmallBucket /></span>
      <button aria-label="Fill color" className="h-[17px] w-[21px] border border-[#444] bg-black" />
      <button aria-label="Black and white" className="mt-[3px] flex h-[17px] items-center pr-[4px]">
        <Icon w={12} h={12}><rect x="4.500" y="4.500" width="6" height="6" fill="#fff" stroke="#333" /><rect x="1" y="1" width="7" height="7" fill="#111" /></Icon>
      </button>
      <button aria-label="Swap colors" className="flex h-[18px] items-center">
        <Icon w={14} h={14}>
          <rect x="1" y="1" width="5" height="5" fill="#111" />
          <rect x="1.500" y="8.500" width="4" height="4" fill="#fff" stroke="#333" />
          <path d="M8 3c5 0 5 8 0 8M10 1L7.500 3 10 5.500M10 8.500L7.500 11l2.500 2" stroke="#222" strokeWidth="1.200" />
        </Icon>
      </button>
    </div>
    <hr className="mx-[2px] mt-[4px] mb-[5px] border-[#999]" />
    {tools5.map((t) => <ToolButton key={t.label} tool={t} selected={t.label === "Snap to Objects"} />)}
  </div>
);

export default function App() {
  return (
    <div className="flex h-screen w-full flex-col border-t border-l border-[#888] bg-[#dcdcdc] pr-[3px] pb-[4px] pl-[3px] font-['DejaVu_Sans_Condensed','DejaVu_Sans',sans-serif] text-[11px]">
      <svg width="0" height="0" className="absolute" aria-hidden="true">
        <defs>
          <radialGradient id="ball" cx=".35" cy=".3" r=".8">
            <stop offset="0" stopColor="#fff" />
            <stop offset="1" stopColor="#888" />
          </radialGradient>
        </defs>
      </svg>
      <MenuBar />
      <div className="flex min-h-0 flex-1 border border-[#444]">
        {/* Document and timeline */}
        <div className="flex min-w-0 flex-1 flex-col">
          <div className={`flex h-[19px] shrink-0 border-b border-[#333] ${tabBar}`}>
            <div className="flex items-center gap-[4px] border-r border-[#555] bg-linear-to-b from-[#e4e4e4] to-[#d0d0d0] pr-[4px] pl-[8px] font-['Open_Sans'] text-[11px] font-bold text-[#777]">
              Anime1*
              <button aria-label="Close document" className="flex size-[12px] items-center justify-center rounded-[2px] border border-[#888]">
                <Icon w={8} h={8}><path d="M1 1l6 6M7 1L1 7" stroke="#555" strokeWidth="1.300" /></Icon>
              </button>
            </div>
          </div>
          <SceneBar />
          <Stage />
          <Timeline />
        </div>
        {/* Docked panels */}
        <div className="flex shrink-0 flex-col border-l border-[#333] bg-[#646464]">
          <div className="flex h-[12px] shrink-0 items-center border-b border-black bg-linear-to-b from-[#555] to-[#404040]">
            <button aria-label="Expand panels" className="flex w-[35px] justify-end pr-[3px]"><Chevrons left /></button>
            <button aria-label="Collapse properties" className="flex w-[284px] justify-end pr-[3px]"><Chevrons /></button>
            <button aria-label="Collapse tools" className="flex w-[29px] justify-end pr-[3px]"><Chevrons /></button>
          </div>
          <div className="flex min-h-0 flex-1">
            <div className="w-[35px] shrink-0">
              {dockGroups.map((group) => (
                <div key={group[0].label} className="border-b border-[#555] bg-[#d6d6d6] pt-[4px] pb-[3px]">
                  <Grip />
                  <div className="mt-[2px]">
                    {group.map((item) => (
                      <button
                        key={item.label}
                        aria-label={item.label}
                        className="flex h-[30px] w-full items-center justify-center drop-shadow-[1px_1px_0_rgba(0,0,0,0.2)]"
                      >
                        <Icon>{item.icon}</Icon>
                      </button>
                    ))}
                  </div>
                </div>
              ))}
            </div>
            <Properties />
            <Toolbox />
          </div>
        </div>
      </div>
    </div>
  );
}
